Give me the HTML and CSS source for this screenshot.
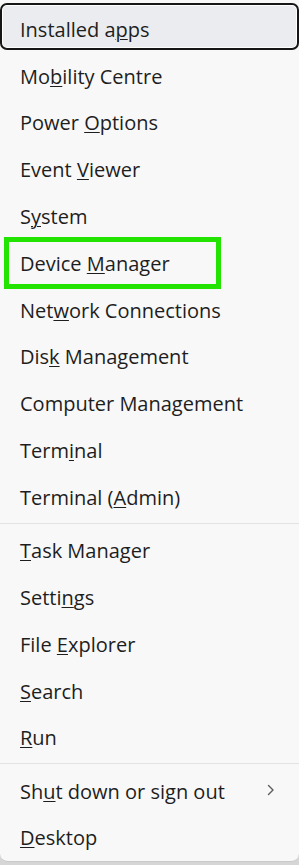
FILE: index.html
```html
<!DOCTYPE html>
<html lang="en">
<head>
<meta charset="utf-8">
<title>Quick Link menu</title>
<link rel="stylesheet" href="styles.css">
</head>
<body>
<div class="menu">
  <div class="item focused"><span class="label">Installed a<u>p</u>ps</span></div>
  <div class="item"><span class="label">Mo<u>b</u>ility Centre</span></div>
  <div class="item"><span class="label">Power <u>O</u>ptions</span></div>
  <div class="item"><span class="label">Event <u>V</u>iewer</span></div>
  <div class="item"><span class="label">S<u>y</u>stem</span></div>
  <div class="item marked"><span class="label">Device <u>M</u>anager</span><span class="mark"></span></div>
  <div class="item"><span class="label">Net<u>w</u>ork Connections</span></div>
  <div class="item"><span class="label">Dis<u>k</u> Management</span></div>
  <div class="item"><span class="label">Computer Mana<u>g</u>ement</span></div>
  <div class="item"><span class="label">Term<u>i</u>nal</span></div>
  <div class="item"><span class="label">Terminal (<u>A</u>dmin)</span></div>
  <div class="sep"></div>
  <div class="item"><span class="label"><u>T</u>ask Manager</span></div>
  <div class="item"><span class="label">Setti<u>n</u>gs</span></div>
  <div class="item"><span class="label">File <u>E</u>xplorer</span></div>
  <div class="item"><span class="label"><u>S</u>earch</span></div>
  <div class="item"><span class="label"><u>R</u>un</span></div>
  <div class="sep"></div>
  <div class="item sub"><span class="label">Sh<u>u</u>t down or sign out</span>
    <svg class="chev" width="8" height="12" viewBox="0 0 8 12"><path d="M1.5 1.5 L6 6 L1.5 10.5" fill="none" stroke="#5c5c5c" stroke-width="1.4" stroke-linecap="round" stroke-linejoin="round"/></svg>
  </div>
  <div class="item"><span class="label"><u>D</u>esktop</span></div>
</div>
</body>
</html>
```
FILE: styles.css
```css
html, body {
  margin: 0;
  padding: 0;
}
body {
  width: 299px;
  height: 865px;
  background: #d6d6d6;
  overflow: hidden;
  font-family: "Open Sans", "Noto Sans", sans-serif;
}
.menu {
  position: relative;
  background: #f8f8f8;
  height: 858px;
  padding-top: 3px;
  border-bottom: 1px solid #c9c9c9;
  border-radius: 0 0 8px 8px;
  box-sizing: content-box;
}
.item {
  position: relative;
  height: 46.8px;
  display: flex;
  align-items: center;
  padding-left: 20px;
  padding-top: 6px;
  box-sizing: border-box;
  font-size: 20px;
  color: #1e1e1e;
  white-space: nowrap;
}
.label {
  white-space: pre;
}
.label u {
  text-decoration-thickness: 1.3px;
  text-underline-offset: 2px;
}
.focused {
  background: #eaecef;
  border-radius: 7px;
  box-shadow: inset 0 0 0 2px #161616, inset 0 0 0 3px #ffffff;
}
.sep {
  height: 1px;
  background: #e3e3e3;
  margin: 5px 0 0.5px;
}
.sub {
  justify-content: space-between;
  padding-right: 24px;
}
.chev {
  display: block;
  margin-top: -3px;
}
.mark {
  position: absolute;
  left: 4px;
  top: 0;
  width: 217px;
  height: 52px;
  border: 5px solid #22e400;
  box-sizing: border-box;
}
```
